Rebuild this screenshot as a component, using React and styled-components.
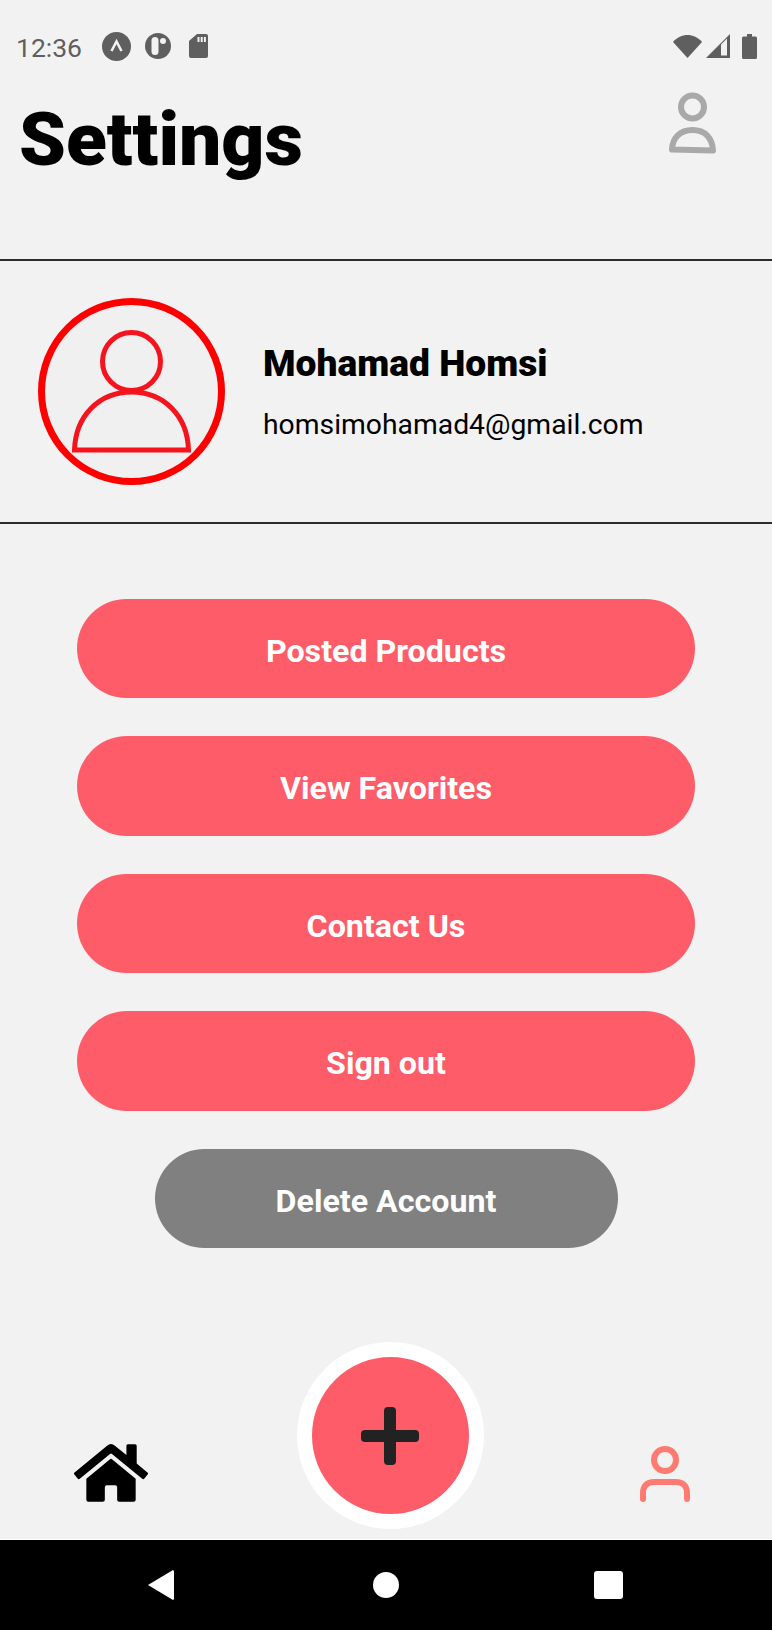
import styled, { createGlobalStyle } from 'styled-components';
import { FaHome } from 'react-icons/fa';

const GlobalStyle = createGlobalStyle`
    html, body {
        margin: 0;
        padding: 0;
        background: #f2f2f2;
    }
    * {
        box-sizing: border-box;
    }
`
const Page = styled.div`
    display: flex;
    flex-direction: column;
    width: 772px;
    height: 1630px;
    font-family: Roboto, "Liberation Sans", sans-serif;
    background: #f2f2f2;
    overflow: hidden;
`
const StatusBar = styled.div`
    display: flex;
    align-items: center;
    height: 92px;
    padding: 0 15px 0 16px;
    color: #5f5f5f;
`
const Time = styled.span`
    font-size: 26.5px;
    line-height: 32px;
    width: 65px;
    margin: 4px 21px 0 0;
`
const StatusIcons = styled.div`
    display: flex;
    align-items: center;
    gap: ${(p) => p.$gap || 0}px;
    margin-left: ${(p) => (p.$right ? 'auto' : 0)};
`
const SdSlot = styled.div`
    display: flex;
    margin-left: 4px;
`
const BatterySlot = styled.div`
    display: flex;
    margin-left: 8px;
`
const Header = styled.header`
    display: flex;
    justify-content: space-between;
    height: 169px;
    padding: 0 56px 0 19px;
    border-bottom: 2px solid #2c2c2c;
`
const Title = styled.h1`
    margin: 0;
    padding-top: 3px;
    font-size: 75px;
    line-height: 88px;
    font-weight: 900;
    color: #000;
`
const Profile = styled.section`
    display: flex;
    align-items: center;
    gap: 38px;
    height: 263px;
    padding-left: 38px;
    border-bottom: 2px solid #2c2c2c;
`
const ProfileText = styled.div`
    display: flex;
    flex-direction: column;
    gap: 24px;
`
const Name = styled.div`
    font-size: 37.2px;
    line-height: 42px;
    font-weight: 900;
    color: #000;
`
const Email = styled.div`
    font-size: 28.3px;
    line-height: 33px;
    color: #000;
`
const Actions = styled.div`
    display: flex;
    flex-direction: column;
    align-items: center;
    gap: 38px;
    padding-top: 74.5px;
`
const ActionButton = styled.button`
    width: ${(p) => (p.$danger ? 463 : 618)}px;
    height: 99.5px;
    padding: 5px 0 0;
    border: none;
    border-radius: 50px;
    background: ${(p) => (p.$danger ? '#808080' : '#ff5c69')};
    color: #fff;
    font-family: inherit;
    font-size: 32.2px;
    font-weight: 700;
`
const TabBar = styled.nav`
    display: flex;
    align-items: flex-end;
    margin-top: auto;
    padding: 0 0 10px 74px;
`
const HomeTab = styled.div`
    display: flex;
    width: 74px;
    margin: 0 148.5px 19px 0;
    color: #000;
`
const Fab = styled.button`
    display: flex;
    align-items: center;
    justify-content: center;
    width: 187px;
    height: 187px;
    margin-right: 156.5px;
    padding: 0;
    border: 15px solid #fff;
    border-radius: 50%;
    background: #ff5c69;
`
const ProfileTab = styled.div`
    display: flex;
    margin-bottom: 27px;
`
const NavBar = styled.div`
    display: flex;
    align-items: center;
    height: 91px;
    padding: 0 149px 0 148px;
    justify-content: space-between;
    background: #000;
    border-top: 1px solid #fff;
`
const HomeKeyWrap = styled.div`
    display: flex;
    margin-left: 4px;
`

const CaretBadge = () => (
    <svg width="29" height="29" viewBox="0 0 29 29">
        <circle cx="14.5" cy="14.5" r="14.5" fill="#5f5f5f" />
        <path d="M9.5 19 L14.5 9.5 L19.5 19" fill="none" stroke="#f2f2f2" strokeWidth="2.6" />
    </svg>
)
const PillBadge = () => (
    <svg width="26" height="28" viewBox="0 0 26 28">
        <circle cx="13" cy="14" r="13" fill="#5f5f5f" />
        <rect x="6.5" y="5" width="7" height="18" rx="3.5" fill="#f2f2f2" />
        <circle cx="18" cy="9" r="3" fill="#f2f2f2" />
    </svg>
)
const SdCard = () => (
    <svg width="19" height="24" viewBox="0 0 19 24">
        <path d="M8 0 H17 a2 2 0 0 1 2 2 V22 a2 2 0 0 1 -2 2 H2 a2 2 0 0 1 -2 -2 V7 Z" fill="#5f5f5f" />
        <path d="M8.5 3 h2 v5 h-2 Z M11.7 3 h2 v5 h-2 Z M14.9 3 h2 v5 h-2 Z" fill="#f2f2f2" />
    </svg>
)
const Wifi = () => (
    <svg width="29" height="23" viewBox="0 0 29 23">
        <path d="M0 7 C8 -2.3 21 -2.3 29 7 L14.5 23 Z" fill="#5f5f5f" />
    </svg>
)
const Signal = () => (
    <svg width="24" height="24" viewBox="0 0 24 24">
        <path d="M0 24 L24 0 V24 Z" fill="#5f5f5f" />
        <path d="M15 20 V10.5 L21 4.5 V21.5 H15 Z" fill="#f2f2f2" />
    </svg>
)
const Battery = () => (
    <svg width="15" height="25" viewBox="0 0 15 25">
        <path d="M5 0 H10 V2.5 H13.5 a1.5 1.5 0 0 1 1.5 1.5 V23.5 a1.5 1.5 0 0 1 -1.5 1.5 H1.5 a1.5 1.5 0 0 1 -1.5 -1.5 V4 a1.5 1.5 0 0 1 1.5 -1.5 H5 Z" fill="#5f5f5f" />
    </svg>
)
const HeaderUser = () => (
    <svg width="47" height="62" viewBox="0 0 47 62">
        <circle cx="23.5" cy="15" r="11.5" fill="none" stroke="#a9a9a9" strokeWidth="6" />
        <path d="M3 57.5 C3.5 46 11 38 23.5 38 C36 38 43.5 46 44 58.5 Z" fill="none" stroke="#a9a9a9" strokeWidth="6" strokeLinejoin="round" />
    </svg>
)
const Avatar = () => (
    <svg width="187" height="187" viewBox="0 0 187 187">
        <circle cx="93.5" cy="93.5" r="90" fill="#f0f0f0" stroke="#ff0000" strokeWidth="7" />
        <circle cx="93.5" cy="63.5" r="29" fill="none" stroke="#f5141e" strokeWidth="5" />
        <path d="M36.5 152 C37.5 118 61 94 93.5 94 C126 94 149.5 118 150.5 152 Z" fill="none" stroke="#f5141e" strokeWidth="5" />
    </svg>
)
const Plus = () => (
    <svg width="58" height="58" viewBox="0 0 58 58">
        <rect x="23" y="0" width="12" height="58" rx="4" fill="#222" />
        <rect x="0" y="23" width="58" height="12" rx="4" fill="#222" />
    </svg>
)
const TabUser = () => (
    <svg width="50" height="56" viewBox="0 0 50 56">
        <circle cx="25" cy="14" r="11" fill="none" stroke="#ff7b72" strokeWidth="6" />
        <path d="M3 53 V47 C3 40 7 36 14 36 H36 C43 36 47 40 47 47 V53" fill="none" stroke="#ff7b72" strokeWidth="6" strokeLinecap="round" />
    </svg>
)
const BackKey = () => (
    <svg width="26" height="30" viewBox="0 0 26 30">
        <path d="M26 1 V29 L25 30 L0 15 L25 0 Z" fill="#fff" />
    </svg>
)
const HomeKey = () => (
    <svg width="26" height="26" viewBox="0 0 26 26">
        <circle cx="13" cy="13" r="13" fill="#fff" />
    </svg>
)
const RecentKey = () => (
    <svg width="29" height="28" viewBox="0 0 29 28">
        <rect width="29" height="28" rx="3" fill="#fff" />
    </svg>
)

export default function App() {
    return (
        <Page>
            <GlobalStyle />
            <StatusBar>
                <Time>12:36</Time>
                <StatusIcons $gap={14}>
                    <CaretBadge />
                    <PillBadge />
                    <SdSlot><SdCard /></SdSlot>
                </StatusIcons>
                <StatusIcons $right $gap={4}>
                    <Wifi />
                    <Signal />
                    <BatterySlot><Battery /></BatterySlot>
                </StatusIcons>
            </StatusBar>
            <Header>
                <Title>Settings</Title>
                <HeaderUser />
            </Header>
            <Profile>
                <Avatar />
                <ProfileText>
                    <Name>Mohamad Homsi</Name>
                    <Email>homsimohamad4@gmail.com</Email>
                </ProfileText>
            </Profile>
            <Actions>
                <ActionButton>Posted Products</ActionButton>
                <ActionButton>View Favorites</ActionButton>
                <ActionButton>Contact Us</ActionButton>
                <ActionButton>Sign out</ActionButton>
                <ActionButton $danger>Delete Account</ActionButton>
            </Actions>
            <TabBar>
                <HomeTab><FaHome size={74} /></HomeTab>
                <Fab><Plus /></Fab>
                <ProfileTab><TabUser /></ProfileTab>
            </TabBar>
            <NavBar>
                <BackKey />
                <HomeKeyWrap><HomeKey /></HomeKeyWrap>
                <RecentKey />
            </NavBar>
        </Page>
    )
}
